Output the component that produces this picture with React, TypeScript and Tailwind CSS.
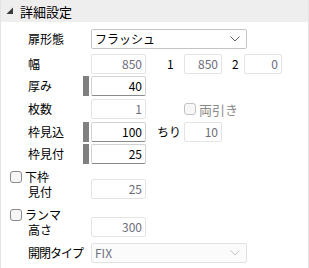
import type { ReactNode } from 'react';

const FONT = '"Noto Sans CJK JP", "Liberation Sans", sans-serif';

function Chevron({ disabled }: { disabled?: boolean }) {
    return (
        <svg width="10" height="6" viewBox="0 0 10 6" className="mr-[6px]">
            <path
                d="M0.5 0.5 L5 5 L9.5 0.5"
                fill="none"
                stroke={disabled ? '#c4c4c4' : '#606060'}
                strokeWidth="1"
            />
        </svg>
    );
}

function Select({ value, disabled }: { value: string; disabled?: boolean }) {
    return (
        <div
            className={`w-[156px] h-[20px] flex items-center justify-between rounded-[2px] border pl-[3px] ${
                disabled
                    ? 'border-[#e2e2e2] bg-[#fbfbfb] text-[#707080]'
                    : 'border-[#c4c4c4] bg-white text-black'
            }`}
        >
            <span>{value}</span>
            <Chevron disabled={disabled} />
        </div>
    );
}

function Num({ value, disabled, w = 'w-[55px]' }: { value: string; disabled?: boolean; w?: string }) {
    return (
        <div
            className={`${w} h-[20px] flex items-center justify-end pr-[3px] rounded-[2px] border ${
                disabled
                    ? 'border-[#e4e4e4] bg-white text-[#6c6c7a]'
                    : 'border-[#d2d2d2] border-b-[#8a8a8a] bg-white text-black'
            }`}
        >
            {value}
        </div>
    );
}

function Box({ disabled }: { disabled?: boolean }) {
    return (
        <div
            className={`w-[12px] h-[12px] rounded-[3px] border shrink-0 ${
                disabled ? 'border-[#c2c2c2] bg-[#f7f7f7]' : 'border-[#8a8a8a] bg-[#f6f6f6]'
            }`}
        />
    );
}

function Row({ label, bar, children, className = '', labelClass = '' }: { label: string; bar?: boolean; children: ReactNode; className?: string; labelClass?: string }) {
    return (
        <div className={`flex items-center h-[20px] ${className}`}>
            <div className={`w-[82px] pl-[27px] whitespace-nowrap ${labelClass}`}>{label}</div>
            {bar ? <div className="w-[6px] h-[20px] bg-[#808080] mr-[2px]" /> : <div className="w-[8px]" />}
            {children}
        </div>
    );
}

export default function App() {
    return (
        <div
            className="w-[309px] h-[268px] bg-white border-x border-[#e4e4e4] text-[12px] leading-none text-black overflow-hidden"
            style={{ fontFamily: FONT }}
        >
            {/* header */}
            <div className="h-[22px] bg-[#eeeeee] flex items-center pl-[5px]">
                <svg width="8" height="8" viewBox="0 0 8 8" className="mr-[6px]">
                    <polygon points="7,0.5 7,7 0.5,7" fill="#3a3a3a" />
                </svg>
                <span className="text-[13px]">詳細設定</span>
            </div>

            <div className="flex flex-col">
                <Row label="扉形態" className="mt-[7px]">
                    <Select value="フラッシュ" />
                </Row>

                <Row label="幅" className="mt-[5px]">
                    <Num value="850" disabled />
                    <span className="w-[38px] pl-[21px]">1</span>
                    <Num value="850" disabled w="w-[38px]" />
                    <span className="w-[22px] pl-[10px]">2</span>
                    <Num value="0" disabled w="w-[38px]" />
                </Row>

                <Row label="厚み" bar className="mt-[2px]">
                    <Num value="40" />
                </Row>

                <Row label="枚数" className="mt-[3px]">
                    <Num value="1" disabled />
                    <div className="flex items-center gap-[3px] ml-[38px] text-[#8a8a8a]">
                        <Box disabled />
                        <span className="text-[13px] whitespace-nowrap">両引き</span>
                    </div>
                </Row>

                <Row label="枠見込" bar className="mt-[3px]">
                    <Num value="100" />
                    <span className="w-[38px] pl-[11px] whitespace-nowrap">ちり</span>
                    <Num value="10" disabled w="w-[38px]" />
                </Row>

                <Row label="枠見付" bar className="mt-[2px]">
                    <Num value="25" />
                </Row>

                {/* 下枠 */}
                <div className="flex items-end mt-[5px]">
                    <div className="w-[90px] flex flex-col">
                        <div className="flex items-center gap-[3px] pl-[9px] h-[15px]">
                            <Box />
                            <span className="whitespace-nowrap">下枠</span>
                        </div>
                        <div className="pl-[27px] h-[15px] flex items-center whitespace-nowrap">見付</div>
                    </div>
                    <Num value="25" disabled />
                </div>

                {/* ランマ */}
                <div className="flex items-end mt-[8px]">
                    <div className="w-[90px] flex flex-col">
                        <div className="flex items-center gap-[3px] pl-[9px] h-[15px]">
                            <Box />
                            <span className="whitespace-nowrap">ランマ</span>
                        </div>
                        <div className="pl-[27px] h-[15px] flex items-center whitespace-nowrap">高さ</div>
                    </div>
                    <Num value="300" disabled />
                </div>

                <Row label="開閉タイプ" labelClass="tracking-[-1px]" className="mt-[6px]">
                    <Select value="FIX" disabled />
                </Row>
            </div>
        </div>
    );
}
